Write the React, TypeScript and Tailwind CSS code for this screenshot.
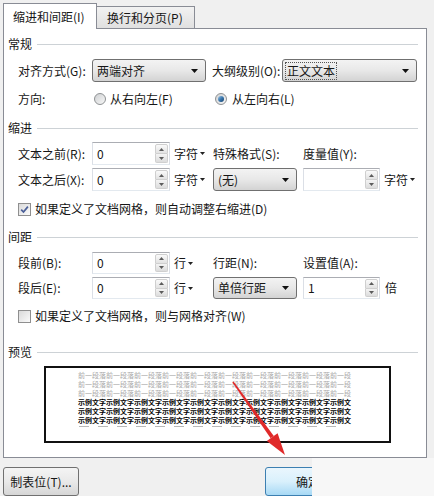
import React from 'react';

const Tri = () => (
  <svg width="7" height="4" viewBox="0 0 7 4" className="shrink-0">
    <path d="M0 0h7L3.5 4z" fill="#111" />
  </svg>
);

const SmallTri = () => (
  <svg width="5" height="3" viewBox="0 0 5 3" className="ml-[2px] shrink-0">
    <path d="M0 0h5L2.5 3z" fill="#222" />
  </svg>
);

function Select({ text, className = '', focus = false }: { text: string; className?: string; focus?: boolean }) {
  return (
    <div className={`flex h-full items-center justify-between rounded-[3px] border border-[#707070] bg-gradient-to-b from-[#f3f3f3] via-[#e8e8e8] to-[#d3d3d3] pl-[3px] pr-[7px] ${className}`}>
      <span className={`px-[1px] leading-[16px] ${focus ? 'outline-1 outline-dotted outline-[#555]' : ''}`}>{text}</span>
      <Tri />
    </div>
  );
}

function Spin({ value, className = '' }: { value: string; className?: string }) {
  return (
    <div className={`flex h-full border border-[#abadb3] border-x-[#dbdfe6] border-b-[#e3e9ef] bg-white ${className}`}>
      <div className="flex flex-1 items-center pl-[4px]">{value}</div>
      <div className="my-[1px] mr-[1px] flex w-[13px] flex-col">
        <div className="flex flex-1 items-center justify-center rounded-t-[2px] border border-[#cfcfcf] bg-gradient-to-b from-[#fafafa] to-[#e2e2e2]">
          <svg width="5" height="3" viewBox="0 0 5 3"><path d="M0 3h5L2.5 0z" fill="#5b5b5b" /></svg>
        </div>
        <div className="flex flex-1 items-center justify-center rounded-b-[2px] border border-t-0 border-[#cfcfcf] bg-gradient-to-b from-[#f4f4f4] to-[#dcdcdc]">
          <svg width="5" height="3" viewBox="0 0 5 3"><path d="M0 0h5L2.5 3z" fill="#5b5b5b" /></svg>
        </div>
      </div>
    </div>
  );
}

function Radio({ on = false }: { on?: boolean }) {
  return (
    <span className="flex h-[12px] w-[12px] shrink-0 items-center justify-center rounded-full border border-[#8e9193] bg-gradient-to-br from-[#cfd1d3] to-[#f7f7f7]">
      {on && <span className="h-[6px] w-[6px] rounded-full bg-gradient-to-br from-[#9cc6e6] via-[#3a77ad] to-[#123f6b]" />}
    </span>
  );
}

function Check({ on = false }: { on?: boolean }) {
  return (
    <span className="flex h-[13px] w-[13px] shrink-0 items-center justify-center border border-[#8f8f8f] bg-gradient-to-br from-[#dadada] to-[#fbfbfb]">
      {on && (
        <svg width="9" height="9" viewBox="0 0 9 9">
          <path d="M1.2 4.6l2.3 2.4L7.9 1.6" stroke="#4a5f98" strokeWidth="1.7" fill="none" />
        </svg>
      )}
    </span>
  );
}

function Header({ text, className = '' }: { text: string; className?: string }) {
  return (
    <div className={`flex h-[16px] items-center pl-[4px] pr-[8px] ${className}`}>
      <span>{text}</span>
      <div className="ml-[5px] h-px flex-1 bg-[#cdd2d6]" />
    </div>
  );
}

// preview lines, 39 glyphs each so they fit the 275px column
const grayLine = '前一段落'.repeat(10).slice(0, 39);
const blackLine = '示例文字'.repeat(10).slice(0, 39);

export default function App() {
  return (
    <div className="relative h-[496px] w-[434px] overflow-hidden bg-[#f0f0f0] text-[12px] text-[#161616] font-['Noto_Sans_CJK_SC','Liberation_Sans',sans-serif]">
      {/* tabs */}
      <div className="flex h-[29px] items-end pl-[3px] pt-[3px]">
        <div className="relative z-10 flex h-[26px] w-[94px] items-start border border-b-0 border-[#898c95] bg-white pl-[9px] pt-[4px]">
          缩进和间距(I)
        </div>
        <div className="mb-px flex h-[22px] w-[98px] items-center border border-b-0 border-l-0 border-[#898c95] bg-gradient-to-b from-[#f2f2f2] to-[#e0e0e0] pl-[10px]">
          换行和分页(P)
        </div>
      </div>

      {/* panel */}
      <div className="-mt-px ml-[3px] h-[430px] w-[424px] border border-[#898c95] bg-white">
        <Header text="常规" className="mt-[7px]" />

        <div className="mt-[7px] flex h-[23px] items-center pl-[14px]">
          <span className="w-[74px]">对齐方式(G):</span>
          <Select text="两端对齐" className="w-[114px]" />
          <span className="ml-[6px] w-[70px]">大纲级别(O):</span>
          <Select text="正文文本" className="w-[135px]" focus />
        </div>

        <div className="mt-[6px] flex h-[22px] items-center pl-[14px]">
          <span className="w-[74px]">方向:</span>
          <div className="flex w-[121px] items-center gap-[4px] pl-[2px]">
            <Radio />
            <span>从右向左(F)</span>
          </div>
          <div className="flex items-center gap-[5px] pl-[2px]">
            <Radio on />
            <span>从左向右(L)</span>
          </div>
        </div>

        <Header text="缩进" className="mt-[10px]" />

        <div className="mt-[6px] flex h-[23px] items-center pl-[14px]">
          <span className="w-[74px]">文本之前(R):</span>
          <Spin value="0" className="w-[78px]" />
          <span className="flex w-[43px] items-center pl-[4px]">字符<SmallTri /></span>
          <span className="w-[90px]">特殊格式(S):</span>
          <span>度量值(Y):</span>
        </div>

        <div className="mt-[3px] flex h-[23px] items-center pl-[14px]">
          <span className="w-[74px]">文本之后(X):</span>
          <Spin value="0" className="w-[78px]" />
          <span className="flex w-[43px] items-center pl-[4px]">字符<SmallTri /></span>
          <Select text="(无)" className="w-[84px]" />
          <Spin value="" className="ml-[6px] w-[77px]" />
          <span className="flex items-center pl-[4px]">字符<SmallTri /></span>
        </div>

        <div className="mt-[8px] flex h-[20px] items-center gap-[4px] pl-[14px]">
          <Check on />
          <span>如果定义了文档网格，则自动调整右缩进(D)</span>
        </div>

        <Header text="间距" className="mt-[10px]" />

        <div className="mt-[7px] flex h-[22px] items-center pl-[14px]">
          <span className="w-[74px]">段前(B):</span>
          <Spin value="0" className="w-[78px]" />
          <span className="flex w-[43px] items-center pl-[4px]">行<SmallTri /></span>
          <span className="w-[90px]">行距(N):</span>
          <span>设置值(A):</span>
        </div>

        <div className="mt-[3px] flex h-[22px] items-center pl-[14px]">
          <span className="w-[74px]">段后(E):</span>
          <Spin value="0" className="w-[78px]" />
          <span className="flex w-[43px] items-center pl-[4px]">行<SmallTri /></span>
          <Select text="单倍行距" className="w-[84px]" />
          <Spin value="1" className="ml-[6px] w-[77px]" />
          <span className="pl-[5px]">倍</span>
        </div>

        <div className="mt-[7px] flex h-[20px] items-center gap-[4px] pl-[14px]">
          <Check />
          <span>如果定义了文档网格，则与网格对齐(W)</span>
        </div>

        <Header text="预览" className="mt-[18px]" />

        <div className="ml-[40px] mt-[6px] h-[77px] w-[347px] border-2 border-[#111] bg-white pl-[32px] pt-[3px]">
          <div className="w-[275px] whitespace-nowrap text-[7px] leading-[9px]">
            <div className="text-[#a8a8a8]">{grayLine}</div>
            <div className="text-[#a8a8a8]">{grayLine}</div>
            <div className="text-[#a8a8a8]">{grayLine}</div>
            <div className="font-bold text-black">{blackLine}</div>
            <div className="font-bold text-black">{blackLine}</div>
            <div className="font-bold text-black">{blackLine}</div>
            <div className="mt-[1px] flex gap-[9px] pl-[1px]">
              {Array.from({ length: 14 }).map((_, i) => (
                <span key={i} className="h-px w-[10px] bg-[#b8b8b8]" />
              ))}
            </div>
          </div>
        </div>
      </div>

      {/* bottom buttons */}
      <div className="flex pl-[3px] pt-[9px]">
        <div className="flex h-[29px] w-[76px] items-center justify-center rounded-[3px] border border-[#707070] bg-gradient-to-b from-[#f4f4f4] via-[#e9e9e9] to-[#d6d6d6]">
          制表位(T)...
        </div>
        <div className="ml-[186px] flex h-[29px] w-[76px] items-center justify-center rounded-[3px] border border-[#3c7fb1] bg-gradient-to-b from-[#eaf6fd] via-[#d9f0fc] to-[#a7d9f5] pl-[10px]">
          确定
        </div>
      </div>

      {/* blurred patch over the lower right */}
      <div className="absolute left-[312px] top-[458px] h-[38px] w-[122px] bg-[#f7f7f7]" />

      {/* red arrow */}
      <svg className="pointer-events-none absolute left-0 top-0" width="434" height="496" viewBox="0 0 434 496">
        <polygon points="232.4,382.4 233.6,381.6 273.8,435.9 270.6,438.3" fill="#e02a2a" />
        <polygon points="266.8,441 277.6,433.2 285,455" fill="#e02a2a" />
      </svg>
    </div>
  );
}
